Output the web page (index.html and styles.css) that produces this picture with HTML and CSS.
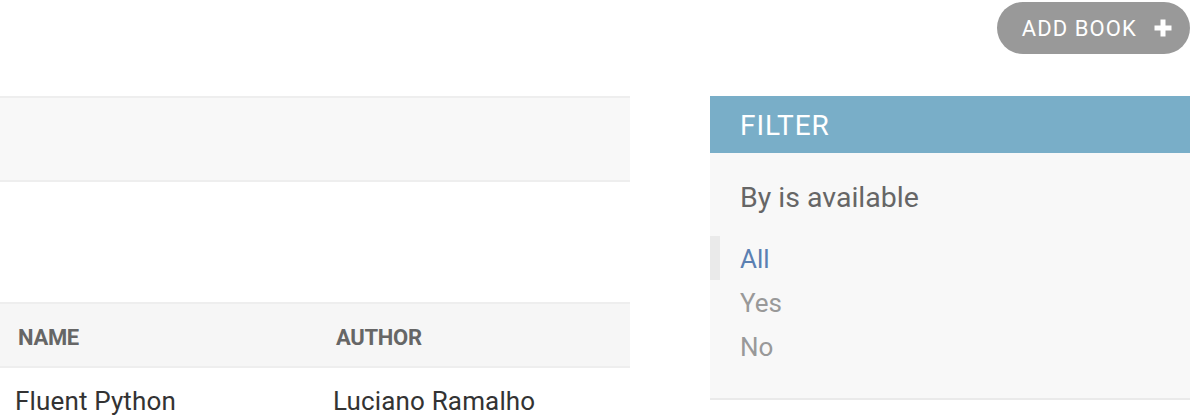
FILE: index.html
```html
<!DOCTYPE html>
<html>
<head>
<meta charset="utf-8">
<link rel="stylesheet" href="styles.css">
</head>
<body>
<div class="object-tools">
  <a class="addlink" href="#">ADD BOOK
    <svg class="plus" width="20" height="20" viewBox="0 0 20 20"><path d="M7.5 1.5h5v6h6v5h-6v6h-5v-6h-6v-5h6z" fill="#fff"/></svg>
  </a>
</div>
<div class="changelist">
  <div class="results">
    <div class="toolbar"></div>
    <div class="actions"></div>
    <table class="result-list">
      <thead>
        <tr><th class="col-name">NAME</th><th>AUTHOR</th></tr>
      </thead>
      <tbody>
        <tr><td class="col-name">Fluent Python</td><td>Luciano Ramalho</td></tr>
      </tbody>
    </table>
  </div>
  <div class="filter">
    <h2 class="filter-title">FILTER</h2>
    <h3 class="filter-sub">By is available</h3>
    <ul class="filter-list">
      <li class="selected"><a href="#">All</a></li>
      <li><a href="#">Yes</a></li>
      <li><a href="#">No</a></li>
    </ul>
  </div>
</div>
</body>
</html>
```
FILE: styles.css
```css
html, body {
  margin: 0;
  padding: 0;
  background: #fff;
  overflow: hidden;
}
body {
  width: 1196px;
  height: 420px;
  font-family: Roboto, "Liberation Sans", sans-serif;
  color: #333;
}
.object-tools {
  display: flex;
  justify-content: flex-end;
  padding: 2px 6px 0 0;
  height: 52px;
  margin-bottom: 42px;
}
.addlink {
  display: flex;
  align-items: center;
  gap: 16px;
  height: 52px;
  box-sizing: border-box;
  padding: 0 17px 0 25px;
  background: #999;
  border-radius: 26px;
  color: #fff;
  text-decoration: none;
  font-size: 22px;
  letter-spacing: 1.1px;
  font-weight: 400;
}
.plus { display: block; }
.changelist {
  display: flex;
  gap: 80px;
  padding-right: 6px;
}
.results {
  width: 630px;
  flex: none;
}
.toolbar {
  height: 82px;
  background: #f8f8f8;
  border-top: 2px solid #eee;
  border-bottom: 2px solid #eee;
}
.actions {
  height: 120px;
}
.result-list {
  width: 100%;
  border-collapse: collapse;
}
.result-list th {
  text-align: left;
  background: #f6f6f6;
  border-top: 2px solid #eee;
  border-bottom: 2px solid #eee;
  color: #666;
  font-size: 22px;
  font-weight: 700;
  height: 64px;
  padding: 4px 0 0 18px;
  box-sizing: border-box;
  letter-spacing: -0.3px;
}
.result-list th.col-name { width: 318px; }
.result-list td {
  font-size: 26px;
  padding: 18px 0 0 15px;
  color: #333;
  letter-spacing: 0.15px;
}
.filter {
  width: 480px;
  flex: none;
  background: #f8f8f8;
  height: 302px;
  border-bottom: 2px solid #eaeaea;
}
.filter-title {
  margin: 0;
  height: 57px;
  background: #79aec8;
  color: #fff;
  font-size: 28px;
  font-weight: 400;
  line-height: 60px;
  padding-left: 30px;
  letter-spacing: 0.9px;
}
.filter-sub {
  margin: 0;
  padding: 26px 0 0 30px;
  font-size: 28.5px;
  font-weight: 400;
  color: #666;
  line-height: 38px;
}
.filter-list {
  list-style: none;
  margin: 0;
  padding: 19px 0 0 0;
}
.filter-list li {
  height: 44px;
  line-height: 46px;
  font-size: 26px;
  border-left: 10px solid transparent;
  padding-left: 20px;
}
.filter-list li.selected {
  border-left-color: #eaeaea;
}
.filter-list a {
  color: #999;
  text-decoration: none;
}
.filter-list li.selected a {
  color: #5b80b2;
}
```
